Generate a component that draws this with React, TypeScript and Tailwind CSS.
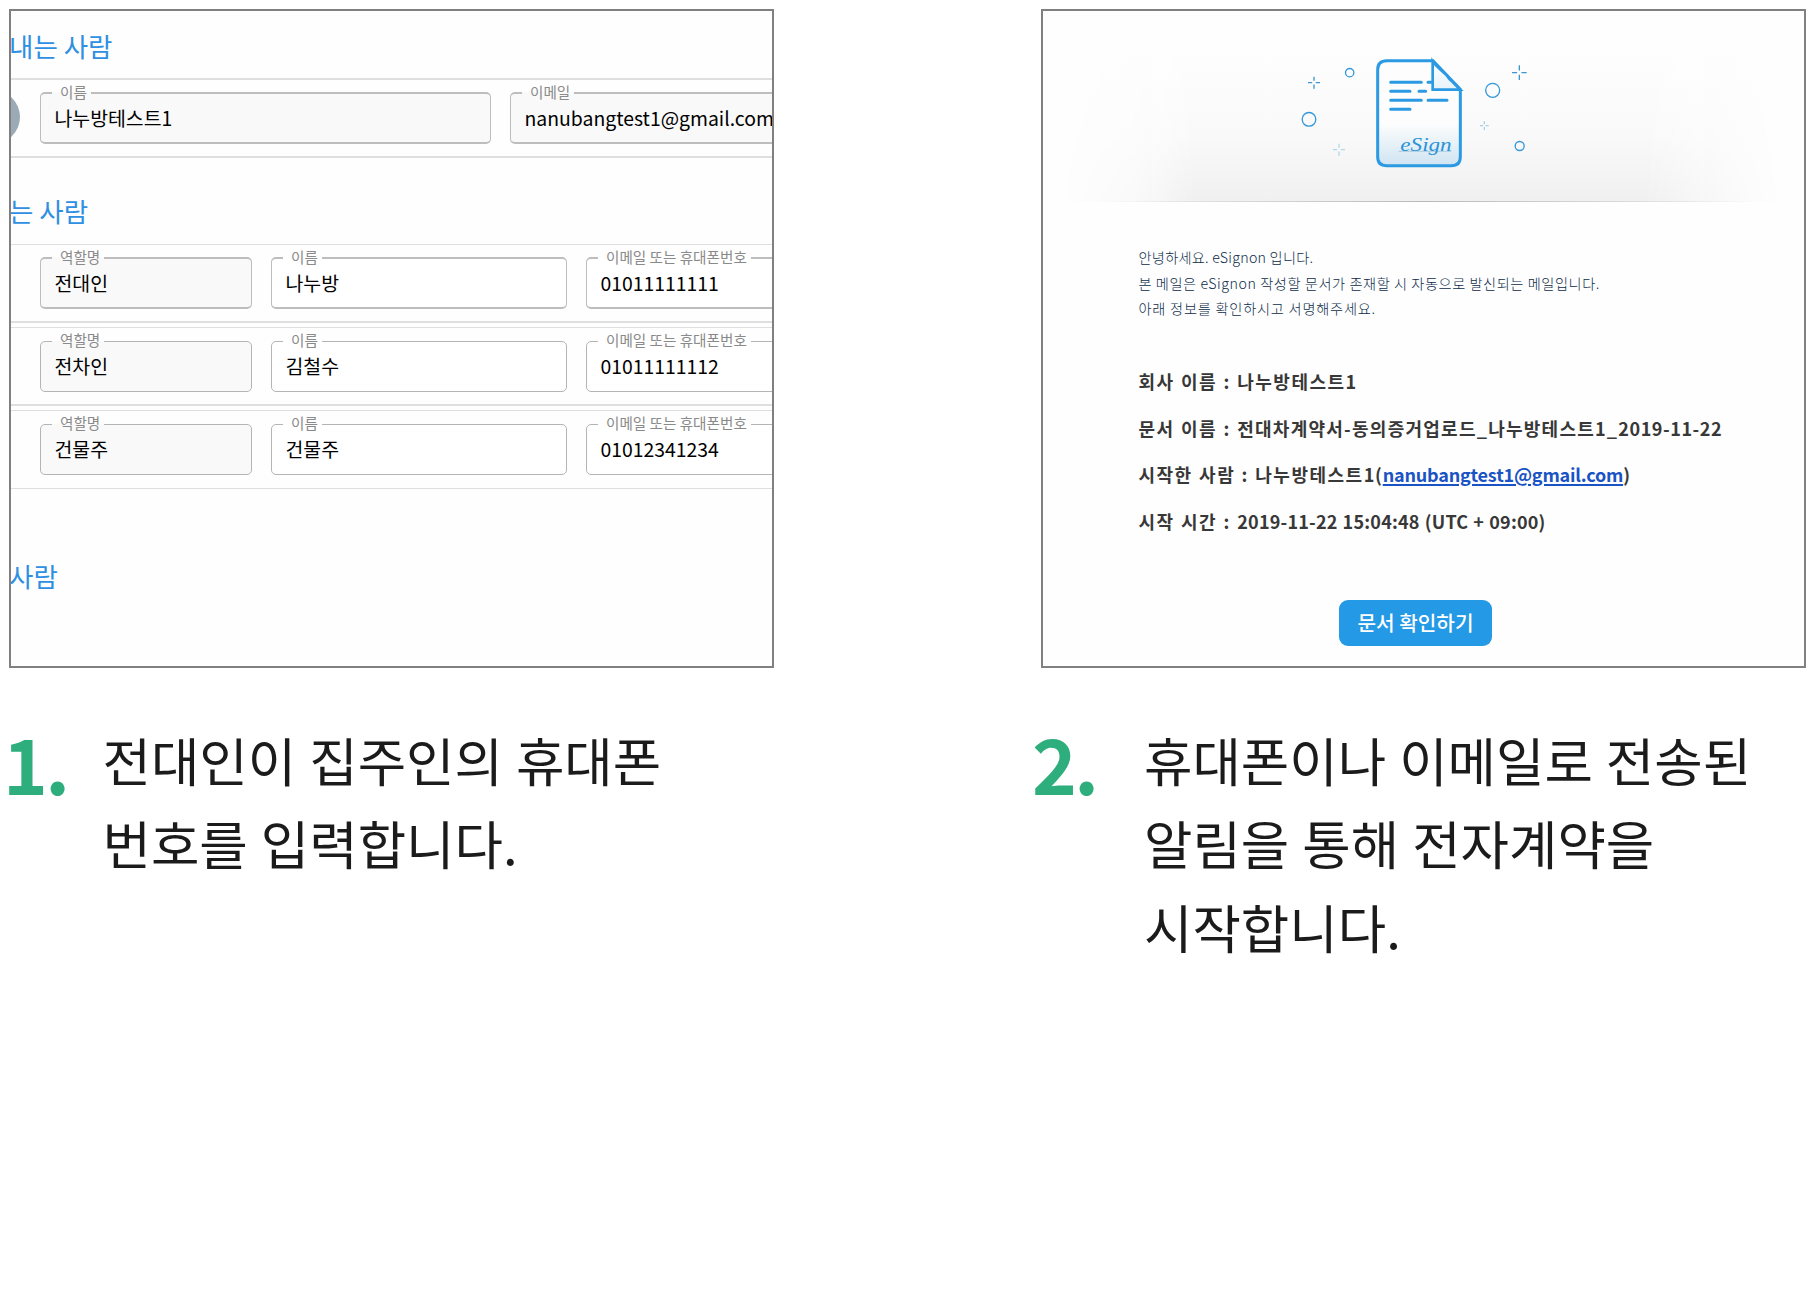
import type { ReactNode } from "react";

function Field({
  label,
  value,
  width,
  filled = false,
  thick = false,
}: {
  label: string;
  value: string;
  width: string;
  filled?: boolean;
  thick?: boolean;
}) {
  return (
    <fieldset
      className={`h-[61px] shrink-0 rounded-[5px] border-x pl-[11px] ${width} ${
        thick ? "border-y-2 border-[#bdbdbd]" : "border-y border-[#b4b4b4]"
      } ${filled ? "bg-[#f9f9f9]" : "bg-white"}`}
    >
      <legend className="h-5 pl-2 pr-1 text-[14.6px] leading-[18px] text-[#8a8a8a] whitespace-nowrap">{label}</legend>
      <div className="pl-[2.5px] text-[19.4px] leading-[30px] text-black whitespace-nowrap">{value}</div>
    </fieldset>
  );
}

function Heading({ children, className }: { children: ReactNode; className: string }) {
  return (
    <h2 className={`flex items-center text-[26.5px] leading-none text-[#2f8fe2] whitespace-nowrap ${className}`}>
      {children}
    </h2>
  );
}

function SignerForm() {
  return (
    <div className="h-[659px] w-[765px] overflow-hidden border-2 border-[#808080] bg-[#fefefe]">
      <Heading className="h-[67px] -ml-[2px] pt-[4px]">내는 사람</Heading>
      <div className="flex h-20 border-y-2 border-[#dfdfdf] pt-[3px]">
        <div className="mt-[14px] h-10 w-[9px] shrink-0 overflow-hidden">
          <div className="-mt-[7px] -ml-[45px] size-[54px] rounded-full bg-[#9aabb6]" />
        </div>
        <div className="ml-5 flex gap-[19px]">
          <Field label="이름" value="나누방테스트1" width="w-[451px]" filled thick />
          <Field label="이메일" value="nanubangtest1@gmail.com" width="w-[451px]" filled thick />
        </div>
      </div>
      <Heading className="h-[86px] -ml-[2px] pt-[20px]">는 사람</Heading>
      <div className="flex h-[79px] gap-[19px] border-t border-b-2 border-[#dfdfdf] pt-[3px] pl-[29px]">
        <Field label="역할명" value="전대인" width="w-[212px]" filled thick />
        <Field label="이름" value="나누방" width="w-[296px]" thick />
        <Field label="이메일 또는 휴대폰번호" value="01011111111" width="w-[296px]" thick />
      </div>
      <div className="mt-1 flex h-[79px] gap-[19px] border-t border-b-2 border-[#dfdfdf] pt-[3px] pl-[29px]">
        <Field label="역할명" value="전차인" width="w-[212px]" filled />
        <Field label="이름" value="김철수" width="w-[296px]" />
        <Field label="이메일 또는 휴대폰번호" value="01011111112" width="w-[296px]" />
      </div>
      <div className="mt-1 flex h-[79px] gap-[19px] border-y border-[#dfdfdf] pt-[3px] pl-[29px]">
        <Field label="역할명" value="건물주" width="w-[212px]" filled />
        <Field label="이름" value="건물주" width="w-[296px]" />
        <Field label="이메일 또는 휴대폰번호" value="01012341234" width="w-[296px]" />
      </div>
      <Heading className="mt-[60px] h-[54px] -ml-[2px]">사람</Heading>
    </div>
  );
}

function Spark({ x, y, r, color }: { x: number; y: number; r: number; color: string }) {
  const g = r * 0.3;
  return (
    <path
      d={`M${x - r} ${y}H${x - g}M${x + g} ${y}H${x + r}M${x} ${y - r}V${y - g}M${x} ${y + g}V${y + r}`}
      stroke={color}
      strokeWidth="4"
    />
  );
}

function DocumentArt() {
  return (
    <svg width="270" height="162" viewBox="0 0 810 486" fill="none" className="ml-[237px]">
      <defs>
        <linearGradient id="sheet" x1="0" y1="0" x2="0" y2="1">
          <stop offset="0.6" stopColor="#fdfdfd" />
          <stop offset="1" stopColor="#cfe4f2" />
        </linearGradient>
        <linearGradient id="fold" x1="0" y1="0" x2="0" y2="1">
          <stop offset="0" stopColor="#ffffff" />
          <stop offset="1" stopColor="#e6f2fa" />
        </linearGradient>
      </defs>
      <path
        d="M320 62H459L541 148V350Q541 377 514 377H320Q293 377 293 350V89Q293 62 320 62Z"
        fill="url(#sheet)"
        stroke="#2b9ae3"
        strokeWidth="9"
      />
      <path
        d="M332 127H424M444 127H456M332 154H390M417 154H437M332 181H424M444 181H501M332 208H390"
        stroke="#2b9ae3"
        strokeWidth="9"
        strokeLinecap="round"
      />
      <path d="M458 64V149H541Q527 136 516 124Q508 119 500 106L480 88Q468 78 458 64Z" fill="url(#fold)" stroke="#2b9ae3" strokeWidth="8" />
      <path d="M356 334H514" stroke="#93bcd8" strokeWidth="2" />
      <text
        x="361"
        y="332"
        textLength="154"
        lengthAdjust="spacingAndGlyphs"
        fill="#2b93d6"
        className="font-['Liberation_Serif'] text-[58px] italic"
      >
        eSign
      </text>
      <g stroke="#3397dc" strokeWidth="4">
        <circle cx="209" cy="98" r="12.5" />
        <circle cx="87" cy="238" r="20.5" />
        <circle cx="638" cy="151" r="21" />
        <circle cx="719" cy="318" r="13.5" />
      </g>
      <Spark x={102} y={128} r={18} color="#3d97cf" />
      <Spark x={718} y={98} r={22} color="#3d97cf" />
      <Spark x={177} y={329} r={18} color="#b4d6ea" />
      <Spark x={613} y={257} r={13} color="#a9cfe6" />
    </svg>
  );
}

function MailPreview() {
  return (
    <div className="h-[659px] w-[765px] overflow-hidden border-2 border-[#808080] bg-[#fefefe]">
      <div className="grid pt-[29px]">
        <div className="col-start-1 row-start-1 h-[162px] bg-linear-to-b from-[#fefefe] from-5% via-[#f9f9f9] via-60% to-[#f0f0f0] [mask-image:linear-gradient(90deg,transparent_2%,rgba(0,0,0,.3)_12%,black_20%,black_79%,rgba(0,0,0,.3)_90%,transparent_97%)]" />
        <div className="z-10 col-start-1 row-start-1 mt-[161px] h-px bg-linear-to-r from-transparent from-8% via-[#b9b9b9] via-50% to-transparent to-94%" />
        <div className="z-10 col-start-1 row-start-1">
          <DocumentArt />
        </div>
      </div>
      <div className="mt-[43px] ml-[95.5px] text-[14.2px] leading-[25.6px] font-light text-[#0c2c4a] whitespace-nowrap">
        <p className="tracking-[0.26px]">안녕하세요. eSignon 입니다.</p>
        <p className="tracking-[0.57px]">본 메일은 eSignon 작성할 문서가 존재할 시 자동으로 발신되는 메일입니다.</p>
        <p className="tracking-[0.78px]">아래 정보를 확인하시고 서명해주세요.</p>
      </div>
      <div className="mt-[36.5px] ml-[95.5px] text-[18px] leading-[46.4px] font-bold tracking-[1.5px] [word-spacing:0.8px] text-[#383838] whitespace-nowrap">
        <p>회사 이름 : 나누방테스트1</p>
        <p>
          문서 이름 : <span className="tracking-[1.25px]">전대차계약서-동의증거업로드_나누방테스트1_</span>
          <span className="tracking-[0.55px]">2019-11-22</span>
        </p>
        <p>
          시작한 사람 : 나누방테스트<span className="tracking-[0.8px]">1(</span>
          <a className="tracking-[-0.2px] text-[#1a53c4] underline decoration-2 underline-offset-2">nanubangtest1@gmail.com</a>)
        </p>
        <p>
          시작 시간 : <span className="tracking-[0.2px]">2019-11-22 15:04:48 (UTC + 09:00)</span>
        </p>
      </div>
      <button className="mt-[56.5px] ml-[296px] block h-[46px] w-[153px] rounded-[9px] bg-[#2499e6] text-[20.2px] leading-none font-medium text-white">
        문서 확인하기
      </button>
    </div>
  );
}

export default function App() {
  return (
    <main className="flex h-[1304px] w-[1815px] gap-[267px] overflow-hidden bg-white pt-[9px] pl-[9px] font-['Noto_Sans_CJK_KR',sans-serif]">
      <section className="w-[765px] shrink-0">
        <SignerForm />
        <div className="mt-[50px] -ml-[6px] flex">
          <div className="mt-[3px] w-[99.5px] shrink-0 text-[76px] leading-[83px] font-bold tracking-[-2.5px] text-[#2fae7d]">1.</div>
          <p className="text-[52.65px] leading-[83.3px] [word-spacing:1.2px] text-[#1b1b1b] whitespace-nowrap">
            전대인이 집주인의 휴대폰
            <br />
            번호를 입력합니다.
          </p>
        </div>
      </section>
      <section className="w-[765px] shrink-0">
        <MailPreview />
        <div className="mt-[50px] -ml-[9px] flex">
          <div className="mt-[3px] w-[112px] shrink-0 text-[76px] leading-[83px] font-bold tracking-[-2.5px] text-[#2fae7d]">2.</div>
          <p className="text-[52.65px] leading-[83.3px] [word-spacing:1.2px] text-[#1b1b1b] whitespace-nowrap">
            휴대폰이나 이메일로 전송된
            <br />
            알림을 통해 전자계약을
            <br />
            시작합니다.
          </p>
        </div>
      </section>
    </main>
  );
}
